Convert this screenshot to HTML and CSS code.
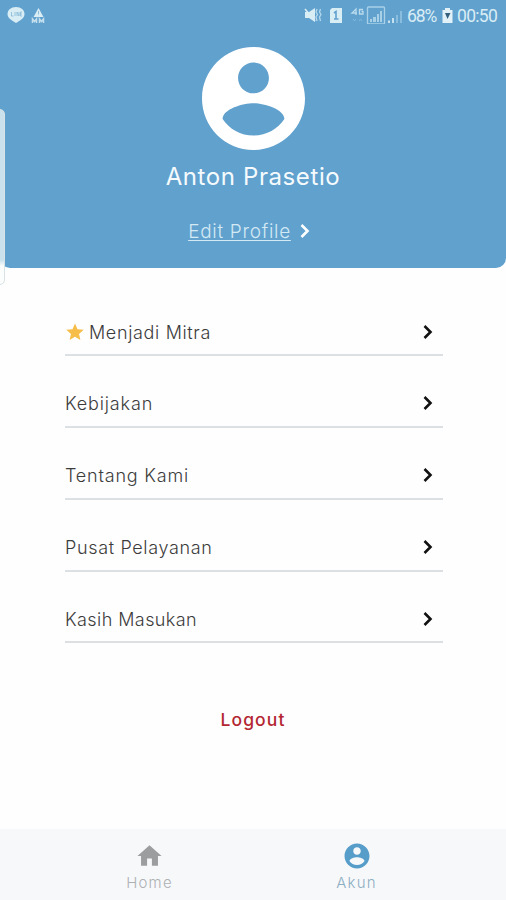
FILE: index.html
```html
<!DOCTYPE html>
<html lang="id">
<head>
<meta charset="utf-8">
<title>Akun</title>
<link rel="stylesheet" href="styles.css">
</head>
<body>
<header class="profile">
  <div class="status">
    <svg class="status-left" width="48" height="24" viewBox="0 0 48 24">
      <path d="M16 0C11 0 7.500 3 7.500 7c0 4 4 6.500 8.500 9 4.500-2.500 8.500-5 8.500-9 0-4-3.500-7-8.500-7z" transform="translate(0 7)" fill="#d9edf5"/>
      <path d="M11.500 12v4h2M15 12v4M17 16v-4l2 4v-4M22 12h-1.500v4H22M20.500 14H22" stroke="#8dbdd9" fill="none" stroke-width=".9"/>
      <path d="M38.500 8l5 9h-10z" fill="#d9edf5"/>
      <path d="M38.500 11v3.500" stroke="#8dbdd9" stroke-width="1"/>
      <path d="M32.500 23v-4l2 2.500 2-2.500v4M39.500 23v-4l2 2.500 2-2.500v4" fill="none" stroke="#c4dfed" stroke-width="1.500"/>
    </svg>
    <div class="status-right">
      <svg width="102" height="24" viewBox="0 0 102 24">
        <path d="M1 12h4l6-4v14l-6-4H1z" fill="#d9edf5"/>
        <path d="M1 9l10 12" stroke="#d9edf5" stroke-width="1.600"/>
        <path d="M13 9l-1 3 1.500 2.500-1.500 2.500 1 4M16.500 9l-1 3 1.500 2.500-1.500 2.500 1 4" fill="none" stroke="#b5d8eb" stroke-width="1.300"/>
        <path d="M28 8h10v15H26V10z" fill="#d9edf5"/>
        <path d="M30 13l2-1.500V19M30 19h4.500" fill="none" stroke="#61a1ce" stroke-width="1.600"/>
        <path d="M52 15V9l-4 4h5M59 9.500h-3.500V14H59v-2.500h-1.500" fill="none" stroke="#b9dbed" stroke-width="1.300"/>
        <path d="M49 19l1.500 2 1.500-2M55 21l1.500-2 1.500 2" fill="none" stroke="#83b9dc"/>
        <rect x="63.500" y="7" width="17" height="17" rx="1" fill="none" stroke="#a8d1e8" stroke-width="1.300"/>
        <path d="M66 22v-3h2v3zM69 22v-5h3v5zM73 22v-8h2v8zM76 22V11h2v11z" fill="#a8d1e8"/>
        <path d="M84 23v-2.500h2V23zM88 23v-5h2v5z" fill="#c5e1f0"/>
        <path d="M92 23v-8h2v8zM96 23V11h2v12z" fill="#89bcdd"/>
      </svg>
      <span class="percent">68%</span>
      <svg width="11" height="24" viewBox="0 0 11 24">
        <path d="M3 8h5v2h2.500v13H.5V10H3z" fill="#e2f1f8"/>
        <path d="M3 13h5.500L5.500 19z" fill="#35617d"/>
      </svg>
      <span class="clock">00:50</span>
    </div>
  </div>
  <svg class="avatar" viewBox="2 2 20 20"><path d="M12 2C6.480 2 2 6.480 2 12s4.480 10 10 10 10-4.480 10-10S17.520 2 12 2zm0 3c1.660 0 3 1.340 3 3s-1.340 3-3 3-3-1.340-3-3 1.340-3 3-3zm0 14.200c-2.500 0-4.710-1.280-6-3.220.030-1.990 4-3.080 6-3.080 1.990 0 5.970 1.090 6 3.080-1.290 1.940-3.500 3.220-6 3.220z"/></svg>
  <h1 class="name">Anton Prasetio</h1>
  <div class="edit">
    <a class="edit-link">Edit Profile</a>
    <svg class="edit-arrow" viewBox="0 0 10 16"><path d="M1.500 2L7.500 8l-6 6"/></svg>
  </div>
</header>
<div class="edge-panel"></div>
<main class="menu">
  <div class="row"><svg class="star" viewBox="0 0 18 18"><path d="M9 .5l2.500 5.700 6.200.6-4.700 4.100 1.400 6.100L9 13.800 3.600 17 5 10.900.3 6.800l6.200-.6z"/></svg><span class="label mitra">Menjadi Mitra</span><svg class="arrow" viewBox="0 0 10 16"><path d="M1.500 2L7.500 8l-6 6"/></svg></div>
  <div class="row"><span class="label kebijakan">Kebijakan</span><svg class="arrow" viewBox="0 0 10 16"><path d="M1.500 2L7.500 8l-6 6"/></svg></div>
  <div class="row"><span class="label tentang">Tentang Kami</span><svg class="arrow" viewBox="0 0 10 16"><path d="M1.500 2L7.500 8l-6 6"/></svg></div>
  <div class="row"><span class="label pusat">Pusat Pelayanan</span><svg class="arrow" viewBox="0 0 10 16"><path d="M1.500 2L7.500 8l-6 6"/></svg></div>
  <div class="row"><span class="label kasih">Kasih Masukan</span><svg class="arrow" viewBox="0 0 10 16"><path d="M1.500 2L7.500 8l-6 6"/></svg></div>
</main>
<div class="logout"><span>Logout</span></div>
<nav class="tabs">
  <div class="tab home">
    <svg viewBox="0 0 24 24"><path d="M10 20v-6h4v6h5v-8h3L12 3 2 12h3v8z"/></svg>
    <span>Home</span>
  </div>
  <div class="tab akun">
    <svg viewBox="0 0 24 24"><path d="M12 2C6.480 2 2 6.480 2 12s4.480 10 10 10 10-4.480 10-10S17.520 2 12 2zm0 3c1.660 0 3 1.340 3 3s-1.340 3-3 3-3-1.340-3-3 1.340-3 3-3zm0 14.200c-2.500 0-4.710-1.280-6-3.220.030-1.990 4-3.080 6-3.080 1.990 0 5.970 1.090 6 3.080-1.290 1.940-3.500 3.220-6 3.220z"/></svg>
    <span>Akun</span>
  </div>
</nav>
</body>
</html>
```
FILE: styles.css
```css
* { box-sizing: border-box; }
body {
  margin: 0;
  width: 506px;
  height: 900px;
  display: flex;
  flex-direction: column;
  overflow: hidden;
  background: #fefefe;
  font-family: Inter, "Liberation Sans", sans-serif;
}
svg { display: block; flex: none; }
.profile {
  height: 268px;
  background: #61a1ce;
  border-radius: 0 0 10px 10px;
  display: flex;
  flex-direction: column;
  align-items: center;
}
.status {
  width: 100%;
  height: 47px;
  padding-right: 8px;
  display: flex;
  justify-content: space-between;
  color: #d9edf5;
  font-family: Roboto, sans-serif;
  font-size: 17.500px;
  line-height: 33px;
}
.status-right { display: flex; }
.percent { width: 31px; margin: 0 4px 0 1px; letter-spacing: -1.100px; }
.clock { width: 41px; margin-left: 4px; letter-spacing: -.7px; white-space: nowrap; }
.avatar { width: 103px; height: 103px; fill: #fff; }
.name {
  margin: 11px 0 0;
  font-size: 24px;
  line-height: 32px;
  font-weight: 400;
  letter-spacing: .6px;
  color: #f5fbfd;
}
.edit {
  margin-top: 27px;
  height: 24px;
  display: flex;
  align-items: center;
  gap: 9px;
  padding-right: 8px;
}
.edit-link {
  font-size: 19px;
  line-height: 24px;
  font-weight: 300;
  letter-spacing: .7px;
  color: #d3e9f4;
  text-decoration: underline;
  text-underline-offset: 2px;
}
.edit-arrow { width: 10px; height: 16px; margin-bottom: 2px; fill: none; stroke: #fff; stroke-width: 2.600; }
.edge-panel {
  position: absolute;
  left: -6px;
  top: 109px;
  width: 11px;
  height: 176px;
  border: 1px solid #d9e2e5;
  border-radius: 5px;
  background: linear-gradient(#cbe2ec 0 150px, #fcfdfd 156px);
}
.menu { margin: 16.600px 63px 0 65px; }
.row {
  height: 71.750px;
  padding: 35px 10px 0 0;
  border-bottom: 2px solid #dce0e2;
  display: flex;
  align-items: flex-start;
}
.label { font-size: 18px; line-height: 26px; font-weight: 300; color: #3c3c3c; white-space: nowrap; }
.mitra { letter-spacing: .65px; }
.kebijakan { letter-spacing: .85px; }
.tentang { letter-spacing: .8px; }
.pusat { letter-spacing: .65px; }
.kasih { letter-spacing: .42px; }
.star { width: 18px; height: 18px; margin: 3px 5px 0 1px; fill: #f6be48; }
.arrow { width: 10px; height: 16px; margin: 4px 0 0 auto; fill: none; stroke: #111; stroke-width: 2.600; }
.logout {
  margin-top: 64px;
  text-align: center;
  font-size: 17.500px;
  line-height: 26px;
  font-weight: 500;
  letter-spacing: 1.100px;
  color: #b32632;
}
.tabs {
  margin-top: auto;
  height: 71px;
  padding: 0 46px;
  background: #f7f8fa;
  display: flex;
}
.tab {
  flex: 1;
  padding-top: 12px;
  display: flex;
  flex-direction: column;
  align-items: center;
  font-size: 15px;
  line-height: 20px;
  font-weight: 300;
  letter-spacing: 1.200px;
}
.tab span { margin-top: 2px; }
.tab svg { width: 30px; height: 30px; }
.home svg { width: 29px; fill: #9c9d9f; }
.home span { color: #aeb1b4; }
.akun svg { fill: #579dca; }
.akun span { color: #8daec2; }
```
